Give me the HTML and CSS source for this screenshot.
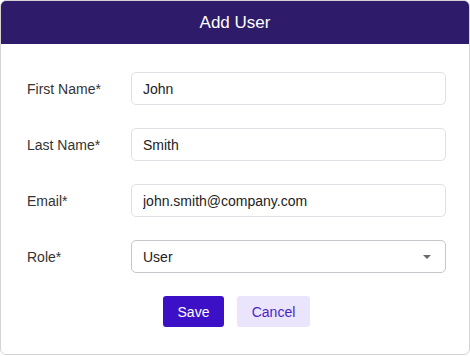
FILE: index.html
```html
<!DOCTYPE html>
<html lang="en">
<head>
    <meta charset="UTF-8">
    <title>Add User</title>
    <link rel="stylesheet" href="styles.css">
</head>
<body>
    <div class="dialog">
        <div class="dialog-header">Add User</div>
        <form class="dialog-body">
            <div class="form-row">
                <label for="first">First Name*</label>
                <input type="text" id="first" class="field" value="John">
            </div>
            <div class="form-row">
                <label for="last">Last Name*</label>
                <input type="text" id="last" class="field" value="Smith">
            </div>
            <div class="form-row">
                <label for="email">Email*</label>
                <input type="text" id="email" class="field" value="john.smith@company.com">
            </div>
            <div class="form-row">
                <label for="role">Role*</label>
                <div class="field select" id="role">
                    <span>User</span>
                    <span class="caret"></span>
                </div>
            </div>
            <div class="actions">
                <button type="button" class="btn btn-save">Save</button>
                <button type="button" class="btn btn-cancel">Cancel</button>
            </div>
        </form>
    </div>
</body>
</html>
```

FILE: styles.css
```css
body {
    margin: 0;
    font-family: 'Liberation Sans', Arial, sans-serif;
}

.dialog {
    width: 470px;
    height: 355px;
    box-sizing: border-box;
    border: 1px solid #d4d4d4;
    border-radius: 6px;
    overflow: hidden;
    background: #fff;
}

.dialog-header {
    height: 43px;
    background: #2e1b6a;
    color: #fff;
    font-size: 17px;
    display: flex;
    align-items: center;
    justify-content: center;
}

.dialog-body {
    margin: 0;
    padding: 28px 23px 0 26px;
}

.form-row {
    display: flex;
    align-items: center;
    margin-bottom: 23px;
}

.form-row label {
    width: 104px;
    font-size: 14px;
    color: #333;
}

.field {
    flex: 1;
    height: 33px;
    box-sizing: border-box;
    border: 1px solid #e0e0e4;
    border-radius: 5px;
    padding: 0 11px;
    font-family: 'Liberation Sans', Arial, sans-serif;
    font-size: 14px;
    color: #222;
    outline: none;
}

.select {
    display: flex;
    align-items: center;
    justify-content: space-between;
    border-color: #c6c6ca;
}

.caret {
    width: 0;
    height: 0;
    border-left: 4px solid transparent;
    border-right: 4px solid transparent;
    border-top: 4px solid #6a6a6a;
    margin-right: 3px;
}

.actions {
    display: flex;
    justify-content: center;
    gap: 13px;
}

.btn {
    height: 31px;
    border: none;
    border-radius: 3px;
    font-family: 'Liberation Sans', Arial, sans-serif;
    font-size: 14px;
    cursor: pointer;
}

.btn-save {
    width: 61px;
    background: #3c10c6;
    color: #fff;
}

.btn-cancel {
    width: 73px;
    background: #ebe4fd;
    color: #4a1fc4;
}
```
